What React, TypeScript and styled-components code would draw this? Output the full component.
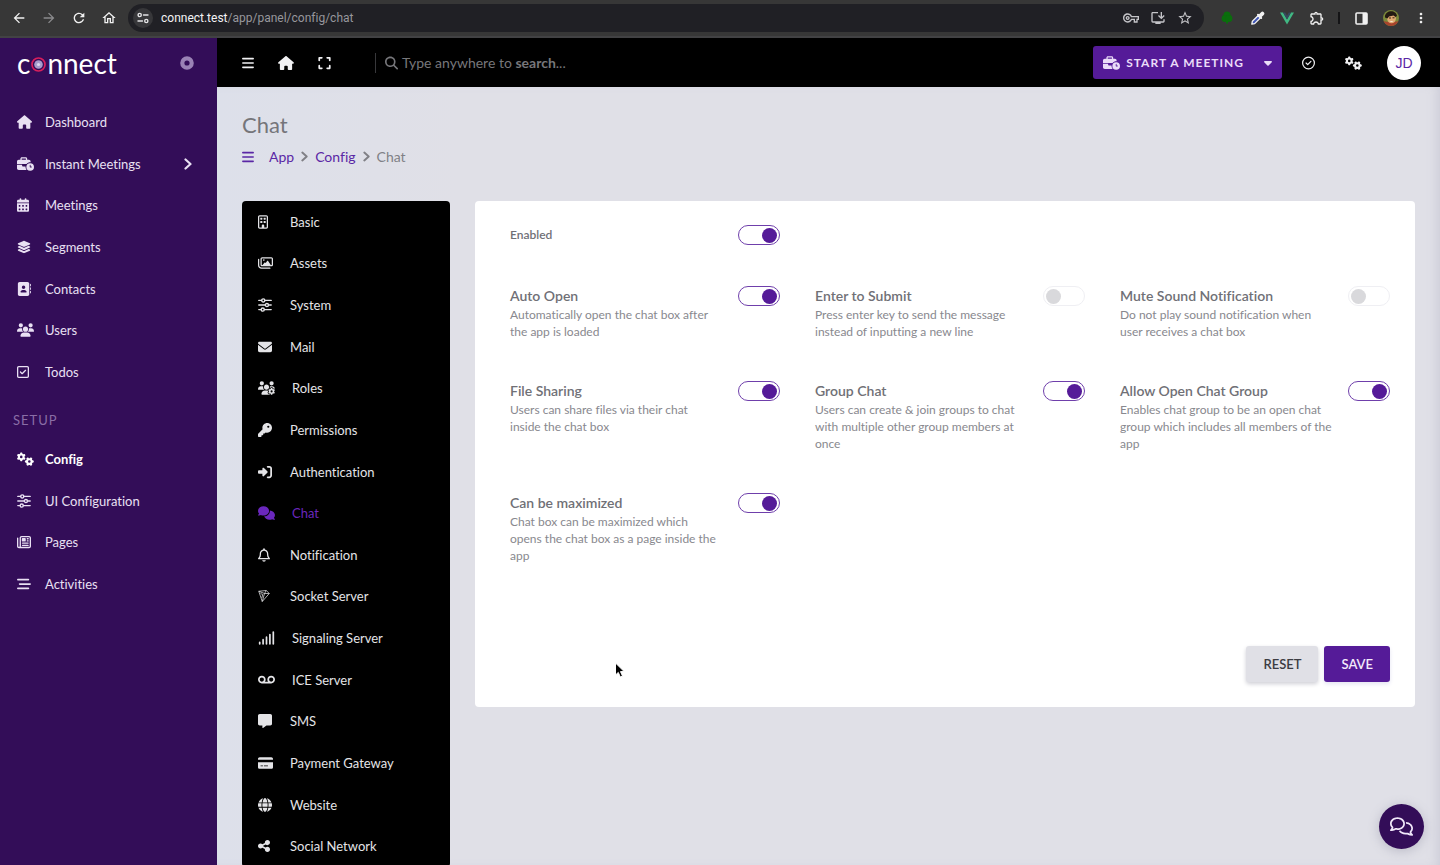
import React from "react";
import styled, { createGlobalStyle } from "styled-components";
import {
  FaAddressBook,
  FaBars,
  FaBarsStaggered,
  FaBusinessTime,
  FaCalendarDays,
  FaCaretDown,
  FaComments,
  FaCreditCard,
  FaEnvelope,
  FaExpand,
  FaGears,
  FaGlobe,
  FaHouse,
  FaKey,
  FaLayerGroup,
  FaMagnifyingGlass,
  FaMessage,
  FaRegBell,
  FaRegBuilding,
  FaRegCircleCheck,
  FaRegComments,
  FaRegImages,
  FaRegNewspaper,
  FaRegSquareCheck,
  FaRightToBracket,
  FaShareNodes,
  FaSignal,
  FaUsers,
  FaUsersGear,
  FaVoicemail,
} from "react-icons/fa6";
import {
  MdArrowBack,
  MdArrowForward,
  MdMoreVert,
  MdOutlineExtension,
  MdOutlineHome,
  MdOutlineInstallDesktop,
  MdOutlineVpnKey,
  MdRefresh,
  MdStarOutline,
} from "react-icons/md";

const GlobalStyle = createGlobalStyle`
  *, *::before, *::after { box-sizing: border-box; }
  body {
    margin: 0;
    background: #e0e0e7;
    font-family: Lato, "Open Sans", sans-serif;
    font-size: 13px;
    font-variant-ligatures: none;
    color: #6c6c72;
  }
  button, input { font: inherit; }
  a { color: inherit; text-decoration: none; }
  h1, h2, p, ul, ol { margin: 0; padding: 0; }
  ul, ol { list-style: none; }
`;

const Shell = styled.div`
  display: flex;
  flex-direction: column;
  height: 100vh;
  overflow: hidden;
`;

/* Browser toolbar */

const BrowserBar = styled.div`
  flex: none;
  display: flex;
  align-items: center;
  gap: 8px;
  height: 38px;
  padding: 0 8px;
  background: #373737;
  border-bottom: 2px solid #424244;
`;

const BrowserButton = styled.button<{ $dim?: boolean; $color?: string }>`
  display: flex;
  align-items: center;
  justify-content: center;
  width: 22px;
  height: 28px;
  padding: 0;
  border: 0;
  background: none;
  color: ${(p) => p.$color ?? (p.$dim ? "#8b8b8d" : "#f1f1f1")};
  font-size: 16px;
`;

const NavButtons = styled.div`
  display: flex;
  gap: 8px;
`;

const AddressBar = styled.div`
  flex: 1;
  display: flex;
  align-items: center;
  gap: 8px;
  height: 28px;
  padding: 0 8px 0 5px;
  border-radius: 14px;
  background: #202025;
`;

const SiteInfo = styled.button`
  display: flex;
  align-items: center;
  justify-content: center;
  width: 20px;
  height: 20px;
  padding: 0;
  border: 0;
  border-radius: 10px;
  background: #37373a;
  color: #e4e4e6;
`;

const Url = styled.a`
  flex: 1;
  font-family: Roboto, sans-serif;
  font-size: 12px;
  line-height: 16px;
  color: #97979c;

  b {
    font-weight: 400;
    color: #f2f2f4;
  }
`;

const AddressActions = styled.div`
  display: flex;
  gap: 5px;
`;

const Extensions = styled.div`
  display: flex;
  align-items: center;
  gap: 8px;
  margin-left: 4px;
`;

const Divider = styled.span`
  width: 2px;
  height: 12px;
  margin: 0 2px;
  background: #141416;
`;

/* Application frame */

const AppFrame = styled.div`
  flex: 1;
  display: flex;
  min-height: 0;
`;

const Sidebar = styled.aside`
  flex: none;
  width: 217px;
  padding: 0 13px;
  background: #330d58;
`;

const SidebarHead = styled.div`
  display: flex;
  align-items: center;
  justify-content: space-between;
  height: 49px;
  padding: 0 10px 0 4px;
  margin-bottom: 14px;
`;

const Logo = styled.a`
  display: flex;
  align-items: center;
  font-size: 28px;
  line-height: 32px;
  color: #fff;

  svg {
    margin: 4px 1px 0;
  }
`;

const PinButton = styled.button`
  display: flex;
  padding: 0;
  border: 0;
  background: none;
`;

const Glyph = styled.span<{ $w: number; $h?: number }>`
  flex: none;
  display: flex;

  svg {
    display: block;
    width: ${(p) => p.$w}px;
    height: ${(p) => p.$h ?? 14}px;
  }
`;

const MenuList = styled.ul<{ $minHeight: number }>`
  display: grid;
  grid-auto-rows: 1fr;
  min-height: ${(p) => p.$minHeight}px;
`;

const SideLink = styled.a<{ $active?: boolean }>`
  display: flex;
  align-items: center;
  height: 100%;
  padding: 0 12px 0 4px;
  font-weight: ${(p) => (p.$active ? 700 : 400)};
  color: ${(p) => (p.$active ? "#fff" : "#e9e0f3")};
`;

const SideIcon = styled.span`
  width: 28px;
`;

const SideLabel = styled.span`
  flex: 1;
`;

const SectionTitle = styled.h2`
  padding: 19px 0 10px;
  font-size: 13px;
  line-height: 16px;
  font-weight: 400;
  letter-spacing: 1px;
  color: #8a6ea6;
`;

const Content = styled.div`
  flex: 1;
  display: flex;
  flex-direction: column;
  min-width: 0;
`;

/* Header */

const TopBar = styled.header`
  flex: none;
  display: flex;
  align-items: center;
  height: 49px;
  padding: 0 19px 0 25px;
  background: #000;
`;

const IconRow = styled.div`
  display: flex;
  align-items: center;
  gap: 24px;
`;

const IconButton = styled.button`
  display: flex;
  align-items: center;
  justify-content: center;
  padding: 0;
  border: 0;
  background: none;
  color: #f1f1f3;
`;

const Search = styled.label`
  position: relative;
  flex: 1;
  display: flex;
  align-items: center;
  gap: 3px;
  height: 20px;
  margin: 0 24px 0 44px;
  padding-left: 9px;
  border-left: 1px solid #38383b;
  font-size: 14px;
  color: #77777b;
`;

const SearchInput = styled.input`
  flex: 1;
  min-width: 0;
  padding: 0;
  border: 0;
  outline: 0;
  background: transparent;
  color: #fff;

  &:not(:placeholder-shown) + span {
    display: none;
  }
`;

const SearchHint = styled.span`
  position: absolute;
  left: 26px;
  pointer-events: none;
`;

const MeetingButton = styled.div`
  display: flex;
  height: 33px;
  border-radius: 3px;
  background: #551b98;
`;

const MeetingAction = styled.button`
  display: flex;
  align-items: center;
  gap: 6px;
  padding: 0 10px;
  border: 0;
  background: none;
  font-size: 12px;
  font-weight: 700;
  letter-spacing: 1px;
  color: #eadcf8;
`;

const HeaderTools = styled.div`
  display: flex;
  align-items: center;
  gap: 30px;
  margin: 0 25px 0 20px;
`;

const Avatar = styled.button`
  width: 34px;
  height: 34px;
  padding: 0;
  border: 0;
  border-radius: 17px;
  background: #fff;
  font-family: "Liberation Sans", sans-serif;
  font-size: 14px;
  color: #5a27a5;
`;

/* Page */

const Page = styled.main`
  flex: 1;
  min-height: 0;
  padding: 25px 25px 0;
  overflow-y: auto;
  scrollbar-width: none;
  background: linear-gradient(90deg, #dde0ea 0, #e0e0e7 240px);
  box-shadow: inset -8px 0 12px -6px #c9c9d6;
`;

const PageTitle = styled.h1`
  font-size: 22px;
  line-height: 26px;
  font-weight: 400;
  color: #75757a;
`;

const Crumbs = styled.ol`
  display: flex;
  align-items: center;
  gap: 7px;
  margin: 9px 0 35px;
  font-size: 14px;
  line-height: 19px;
  color: #808086;

  li {
    display: flex;
    align-items: center;
  }

  li:first-child {
    margin-right: 8px;
  }

  a {
    color: #5a27a5;
  }
`;

const Columns = styled.div`
  display: flex;
  align-items: flex-start;
  gap: 25px;
`;

const ConfigNav = styled.nav`
  flex: none;
  width: 208px;
  border-radius: 4px;
  background: #000;
`;

const ConfigLink = styled.a<{ $active?: boolean }>`
  display: flex;
  align-items: center;
  gap: 17px;
  height: 100%;
  padding: 0 16px;
  color: ${(p) => (p.$active ? "#6a27bd" : "#e4e4e7")};
`;

const ConfigIcon = styled.span`
  min-width: 15px;
`;

const Card = styled.form`
  flex: 1;
  min-width: 0;
  padding: 24px 25px 25px 35px;
  border-radius: 4px;
  background: #fff;
`;

const SettingGrid = styled.div`
  display: grid;
  grid-template-columns: repeat(3, 1fr);
  gap: 41px 35px;
  margin-bottom: 41px;
`;

const Setting = styled.div`
  display: flex;
  align-items: flex-start;
  justify-content: space-between;
  gap: 10px;
`;

const SettingName = styled.label<{ $small?: boolean }>`
  display: block;
  font-size: ${(p) => (p.$small ? 12 : 14)}px;
  line-height: 20px;
  font-weight: 600;
  color: #707076;
`;

const SettingHelp = styled.p`
  font-size: 12px;
  line-height: 17px;
  white-space: pre-line;
  color: #88888e;
`;

const Toggle = styled.input`
  flex: none;
  appearance: none;
  display: flex;
  align-items: center;
  width: 42px;
  height: 20px;
  margin: 0;
  padding: 0 2px;
  border: 1px solid #efeff3;
  border-radius: 10px;
  background: #fff;

  &::after {
    content: "";
    width: 15px;
    height: 15px;
    border-radius: 50%;
    background: #d9d9dc;
  }

  &:checked {
    justify-content: flex-end;
    border-color: #6f3fab;
  }

  &:checked::after {
    background: #551b98;
  }
`;

const FormActions = styled.div`
  display: flex;
  justify-content: flex-end;
  gap: 6px;
  padding-top: 41px;
`;

const FormButton = styled.button<{ $primary?: boolean }>`
  height: 36px;
  padding: 0 17px;
  border: 0;
  border-radius: 3px;
  background: ${(p) => (p.$primary ? "#551b98" : "#e0e0e6")};
  box-shadow: 0 2px 4px ${(p) => (p.$primary ? "#e4e4f2" : "#cfcfd6")};
  font-size: 13px;
  font-weight: 600;
  color: ${(p) => (p.$primary ? "#f3eafc" : "#3c3c42")};
`;

const ChatButton = styled.button`
  position: fixed;
  right: 16px;
  bottom: 16px;
  display: flex;
  align-items: center;
  justify-content: center;
  width: 45px;
  height: 45px;
  padding: 0;
  border: 0;
  border-radius: 50%;
  background: #330d58;
  box-shadow: 0 2px 12px #b9b9c6;
  color: #f1e8fa;
`;

const Pointer = styled.svg`
  position: fixed;
  left: 614px;
  top: 662px;
  pointer-events: none;
`;

/* Drawn icons */

const ChevronIcon = () => (
  <svg viewBox="0 0 8 12" fill="none" stroke="currentColor" strokeWidth="2.200" strokeLinecap="round" strokeLinejoin="round">
    <path d="M1.500 1.500L6.500 6l-5 4.500" />
  </svg>
);

const SlidersIcon = () => (
  <svg viewBox="0 0 26 26" fill="none" stroke="currentColor" strokeWidth="2.600" strokeLinecap="round">
    <path d="M1.500 4.500h5M13 4.500h11.500M1.500 13h11.500M20 13h4.500M1.500 21.500h4M12 21.500h12.500" />
    <circle cx="9.800" cy="4.500" r="2.900" />
    <circle cx="16.500" cy="13" r="2.900" />
    <circle cx="8.800" cy="21.500" r="2.900" />
  </svg>
);

const SocketIcon = () => (
  <svg viewBox="0 0 24 26" fill="none" stroke="currentColor" strokeWidth="1.500" strokeLinejoin="round">
    <path d="M1.500 3.500L16.500 2 22.500 8 8.500 24z" />
    <path d="M1.500 3.500L13 8 22.500 8M13 8L8.500 24M13 8L16.500 2M5 8l4.500 2-2 7" />
  </svg>
);

const TuneIcon = () => (
  <svg width="12" height="12" viewBox="0 0 12 12" fill="none" stroke="currentColor" strokeWidth="1.400" strokeLinecap="round">
    <circle cx="2.700" cy="3" r="1.600" />
    <path d="M6.500 3h4.500M1 9h4.500" />
    <circle cx="9.300" cy="9" r="1.600" />
  </svg>
);

const TreeIcon = () => (
  <svg width="14" height="16" viewBox="0 0 14 16" fill="#0a6e0c">
    <circle cx="7" cy="5" r="3.500" />
    <circle cx="5" cy="8.500" r="3.400" />
    <circle cx="9" cy="8.500" r="3.400" />
    <path d="M6 9h2v4.500H6z" />
  </svg>
);

const DropperIcon = () => (
  <svg width="15" height="15" viewBox="0 0 15 15" strokeLinecap="round" strokeLinejoin="round">
    <path d="M1.800 13.200l.600-3L8.500 4.200l2.300 2.300-6.100 6.100z" fill="#3f55b5" stroke="#f2f2f2" strokeWidth="1.300" />
    <path d="M8 3.800l3.200 3.200" stroke="#f2f2f2" strokeWidth="2" />
    <path d="M10 5l2.400-2.400" stroke="#f2f2f2" strokeWidth="3.800" />
  </svg>
);

const VueIcon = () => (
  <svg width="14" height="13" viewBox="0 0 14 13">
    <path d="M0 .500h3L7 7.500l4-7h3L7 12.500z" fill="#41b883" />
    <path d="M3 .500h2.200L7 3.700 8.800.500H11L7 7.500z" fill="#35495e" />
  </svg>
);

const PanelIcon = () => (
  <svg width="13" height="13" viewBox="0 0 13 13">
    <rect x="1" y="1" width="11" height="11" rx="1" fill="none" stroke="#f1f1f1" strokeWidth="1.600" />
    <path d="M7.500 1H12v11H7.500z" fill="#f1f1f1" />
  </svg>
);

const ProfileIcon = () => (
  <svg width="16" height="16" viewBox="0 0 16 16">
    <clipPath id="profile-clip">
      <circle cx="8" cy="8" r="8" />
    </clipPath>
    <g clipPath="url(#profile-clip)">
      <path d="M0 0h16v16H0z" fill="#7d8a3a" />
      <path d="M0 11l5 1h6l5-1v5H0z" fill="#a8432c" />
      <ellipse cx="8.500" cy="8.500" rx="4.400" ry="4.800" fill="#e0aa72" />
      <path d="M2 7.500c-1-7 11-9 12-1.500l-1.500 1-2-1.500-4.500 1-1.500 2z" fill="#231a12" />
      <path d="M6 8h2M9.500 7.800h2" stroke="#3a2415" />
      <path d="M6.500 11q2 1.600 4 0z" fill="#fff" />
    </g>
  </svg>
);

const LogoRing = () => (
  <svg width="15" height="15" viewBox="0 0 15 15">
    <circle cx="7.500" cy="7.500" r="6.500" fill="none" stroke="#d81f5c" strokeWidth="1.700" />
    <circle cx="7.500" cy="7.500" r="4.300" fill="#a79bcb" />
    <circle cx="7.500" cy="7.500" r="1.600" fill="#dcd8f0" />
  </svg>
);

type Item = { label: string; icon: React.ReactNode; width: number; active?: boolean; more?: boolean };

const mainMenu: Item[] = [
  { label: "Dashboard", icon: <FaHouse />, width: 15 },
  { label: "Instant Meetings", icon: <FaBusinessTime />, width: 17, more: true },
  { label: "Meetings", icon: <FaCalendarDays />, width: 12 },
  { label: "Segments", icon: <FaLayerGroup />, width: 14 },
  { label: "Contacts", icon: <FaAddressBook />, width: 14 },
  { label: "Users", icon: <FaUsers />, width: 17 },
  { label: "Todos", icon: <FaRegSquareCheck />, width: 12 },
];

const setupMenu: Item[] = [
  { label: "Config", icon: <FaGears />, width: 17, active: true },
  { label: "UI Configuration", icon: <SlidersIcon />, width: 14 },
  { label: "Pages", icon: <FaRegNewspaper />, width: 14 },
  { label: "Activities", icon: <FaBarsStaggered />, width: 14 },
];

const configMenu: Item[] = [
  { label: "Basic", icon: <FaRegBuilding />, width: 10 },
  { label: "Assets", icon: <FaRegImages />, width: 15 },
  { label: "System", icon: <SlidersIcon />, width: 14 },
  { label: "Mail", icon: <FaEnvelope />, width: 14 },
  { label: "Roles", icon: <FaUsersGear />, width: 17 },
  { label: "Permissions", icon: <FaKey />, width: 14 },
  { label: "Authentication", icon: <FaRightToBracket />, width: 14 },
  { label: "Chat", icon: <FaComments />, width: 17, active: true },
  { label: "Notification", icon: <FaRegBell />, width: 12 },
  { label: "Socket Server", icon: <SocketIcon />, width: 12 },
  { label: "Signaling Server", icon: <FaSignal />, width: 17 },
  { label: "ICE Server", icon: <FaVoicemail />, width: 17 },
  { label: "SMS", icon: <FaMessage />, width: 14 },
  { label: "Payment Gateway", icon: <FaCreditCard />, width: 15 },
  { label: "Website", icon: <FaGlobe />, width: 14 },
  { label: "Social Network", icon: <FaShareNodes />, width: 12 },
];

const settings = [
  { id: "auto-open", name: "Auto Open", help: "Automatically open the chat box after\nthe app is loaded", on: true },
  { id: "enter-submit", name: "Enter to Submit", help: "Press enter key to send the message\ninstead of inputting a new line", on: false },
  { id: "mute-sound", name: "Mute Sound Notification", help: "Do not play sound notification when\nuser receives a chat box", on: false },
  { id: "file-sharing", name: "File Sharing", help: "Users can share files via their chat\ninside the chat box", on: true },
  { id: "group-chat", name: "Group Chat", help: "Users can create & join groups to chat\nwith multiple other group members at\nonce", on: true },
  { id: "open-group", name: "Allow Open Chat Group", help: "Enables chat group to be an open chat\ngroup which includes all members of the\napp", on: true },
  { id: "maximize", name: "Can be maximized", help: "Chat box can be maximized which\nopens the chat box as a page inside the\napp", on: true },
];

const SideMenu = ({ items, minHeight }: { items: Item[]; minHeight: number }) => (
  <MenuList $minHeight={minHeight}>
    {items.map((item) => (
      <li key={item.label}>
        <SideLink href="#" $active={item.active}>
          <SideIcon><Glyph $w={item.width}>{item.icon}</Glyph></SideIcon>
          <SideLabel>{item.label}</SideLabel>
          {item.more && <Glyph $w={8} $h={12}><ChevronIcon /></Glyph>}
        </SideLink>
      </li>
    ))}
  </MenuList>
);

export default function App() {
  return (
    <>
      <GlobalStyle />
      <Shell>
        <BrowserBar>
          <NavButtons>
            <BrowserButton aria-label="Back"><MdArrowBack /></BrowserButton>
            <BrowserButton aria-label="Forward" $dim><MdArrowForward /></BrowserButton>
            <BrowserButton aria-label="Reload"><MdRefresh /></BrowserButton>
            <BrowserButton aria-label="Home"><MdOutlineHome /></BrowserButton>
          </NavButtons>
          <AddressBar>
            <SiteInfo aria-label="Site information"><TuneIcon /></SiteInfo>
            <Url href="#"><b>connect.test</b>/app/panel/config/chat</Url>
            <AddressActions>
              <BrowserButton aria-label="Passwords" $color="#c4c4c8"><MdOutlineVpnKey /></BrowserButton>
              <BrowserButton aria-label="Install" $color="#c4c4c8"><MdOutlineInstallDesktop /></BrowserButton>
              <BrowserButton aria-label="Bookmark" $color="#c4c4c8"><MdStarOutline /></BrowserButton>
            </AddressActions>
          </AddressBar>
          <Extensions>
            <BrowserButton aria-label="Tree extension"><TreeIcon /></BrowserButton>
            <BrowserButton aria-label="Color picker"><DropperIcon /></BrowserButton>
            <BrowserButton aria-label="Vue devtools"><VueIcon /></BrowserButton>
            <BrowserButton aria-label="Extensions"><MdOutlineExtension /></BrowserButton>
            <Divider />
            <BrowserButton aria-label="Side panel"><PanelIcon /></BrowserButton>
            <BrowserButton aria-label="Profile"><ProfileIcon /></BrowserButton>
            <BrowserButton aria-label="More"><MdMoreVert /></BrowserButton>
          </Extensions>
        </BrowserBar>

        <AppFrame>
          <Sidebar>
            <SidebarHead>
              <Logo href="#">c<LogoRing />nnect</Logo>
              <PinButton aria-label="Pin sidebar">
                <svg width="14" height="14" viewBox="0 0 14 14">
                  <circle cx="7" cy="7" r="4.700" fill="none" stroke="#9a82b5" strokeWidth="4.200" />
                </svg>
              </PinButton>
            </SidebarHead>
            <SideMenu items={mainMenu} minHeight={292} />
            <SectionTitle>SETUP</SectionTitle>
            <SideMenu items={setupMenu} minHeight={167} />
          </Sidebar>

          <Content>
            <TopBar>
              <IconRow>
                <IconButton aria-label="Toggle menu"><Glyph $w={12}><FaBars /></Glyph></IconButton>
                <IconButton aria-label="Home"><Glyph $w={16}><FaHouse /></Glyph></IconButton>
                <IconButton aria-label="Full screen"><Glyph $w={13}><FaExpand /></Glyph></IconButton>
              </IconRow>
              <Search>
                <Glyph $w={13}><FaMagnifyingGlass /></Glyph>
                <SearchInput type="text" placeholder=" " aria-label="Search" />
                <SearchHint>Type anywhere to <b>search</b>...</SearchHint>
              </Search>
              <MeetingButton>
                <MeetingAction><Glyph $w={17}><FaBusinessTime /></Glyph>START A MEETING</MeetingAction>
                <MeetingAction aria-label="More meeting options"><Glyph $w={8} $h={13}><FaCaretDown /></Glyph></MeetingAction>
              </MeetingButton>
              <HeaderTools>
                <IconButton aria-label="Todos"><Glyph $w={13}><FaRegCircleCheck /></Glyph></IconButton>
                <IconButton aria-label="Settings"><Glyph $w={17}><FaGears /></Glyph></IconButton>
              </HeaderTools>
              <Avatar aria-label="Account">JD</Avatar>
            </TopBar>

            <Page>
              <PageTitle>Chat</PageTitle>
              <Crumbs>
                <li><a href="#" aria-label="Menu"><Glyph $w={12}><FaBars /></Glyph></a></li>
                <li><a href="#">App</a></li>
                <li><Glyph $w={7} $h={11}><ChevronIcon /></Glyph></li>
                <li><a href="#">Config</a></li>
                <li><Glyph $w={7} $h={11}><ChevronIcon /></Glyph></li>
                <li>Chat</li>
              </Crumbs>
              <Columns>
                <ConfigNav>
                  <MenuList $minHeight={666}>
                    {configMenu.map((item) => (
                      <li key={item.label}>
                        <ConfigLink href="#" $active={item.active}>
                          <ConfigIcon><Glyph $w={item.width}>{item.icon}</Glyph></ConfigIcon>
                          {item.label}
                        </ConfigLink>
                      </li>
                    ))}
                  </MenuList>
                </ConfigNav>
                <Card onSubmit={(e) => e.preventDefault()}>
                  <SettingGrid>
                    <Setting>
                      <SettingName $small htmlFor="enabled">Enabled</SettingName>
                      <Toggle id="enabled" type="checkbox" role="switch" defaultChecked />
                    </Setting>
                  </SettingGrid>
                  <SettingGrid>
                    {settings.map((s) => (
                      <Setting key={s.id}>
                        <div>
                          <SettingName htmlFor={s.id}>{s.name}</SettingName>
                          <SettingHelp>{s.help}</SettingHelp>
                        </div>
                        <Toggle id={s.id} type="checkbox" role="switch" defaultChecked={s.on} />
                      </Setting>
                    ))}
                  </SettingGrid>
                  <FormActions>
                    <FormButton type="reset">RESET</FormButton>
                    <FormButton type="submit" $primary>SAVE</FormButton>
                  </FormActions>
                </Card>
              </Columns>
            </Page>
          </Content>
        </AppFrame>
      </Shell>
      <ChatButton aria-label="Open chat"><Glyph $w={23} $h={19}><FaRegComments /></Glyph></ChatButton>
      <Pointer width="11" height="17" viewBox="0 0 11 17">
        <path d="M1.500 1v12l2.800-2.600 2 4.600 2.200-1-2-4.400h3.700z" fill="#000" stroke="#fff" strokeWidth="1" />
      </Pointer>
    </>
  );
}
